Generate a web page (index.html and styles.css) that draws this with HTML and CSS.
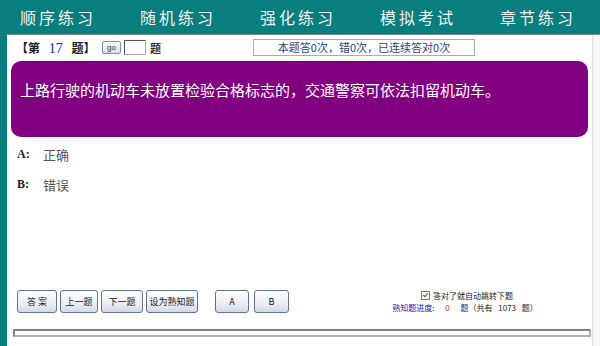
FILE: index.html
```html
<!DOCTYPE html>
<html lang="zh-CN">
<head>
    <meta charset="UTF-8">
    <title>练习</title>
    <link rel="stylesheet" href="styles.css">
</head>
<body>

    <div class="nav">
        <div class="nav-item">顺序练习</div>
        <div class="nav-item">随机练习</div>
        <div class="nav-item">强化练习</div>
        <div class="nav-item">模拟考试</div>
        <div class="nav-item">章节练习</div>
    </div>

    <div class="main">
        <div class="content">
            <div class="topbar">
                <div class="qno">【第 <span class="num">17</span> 题】</div>
                <button class="go">go</button>
                <input type="text" class="jump">
                <span class="ti">题</span>
                <div class="stats">本题答0次，错0次，已连续答对0次</div>
            </div>

            <div class="question">上路行驶的机动车未放置检验合格标志的，交通警察可依法扣留机动车。</div>

            <div class="options">
                <div class="option"><span class="key">A:</span><span class="val">正确</span></div>
                <div class="option"><span class="key">B:</span><span class="val">错误</span></div>
            </div>

            <div class="actions">
                <div class="btns">
                    <button class="btn w40">答 案</button>
                    <button class="btn w38">上一题</button>
                    <button class="btn w42">下一题</button>
                    <button class="btn w51">设为熟知题</button>
                    <button class="btn w34 first-ans">A</button>
                    <button class="btn w35">B</button>
                </div>
                <div class="info">
                    <div class="auto"><span class="check"></span>答对了就自动跳转下题</div>
                    <div class="progress-text">熟知题进度: <span class="red">0</span> 题<span class="dark">（共有 <span class="total">1073</span> 题）</span></div>
                </div>
            </div>

            <div class="bar"></div>
        </div>
        <div class="side"></div>
    </div>

</body>
</html>
```

FILE: styles.css
```css
/* page */
body {
    margin: 0;
    background-color: #087e7e;
    font-family: "Noto Sans CJK SC", "Liberation Sans", sans-serif;
    height: 346px;
    overflow: hidden;
}

.nav {
    height: 34px;
    display: flex;
    align-items: center;
}

.nav-item {
    width: 124px;
    box-sizing: border-box;
    padding-left: 20px;
    color: #f4f4f4;
    font-size: 16px;
    letter-spacing: 3px;
}

.main {
    margin-left: 7px;
    display: flex;
    height: 312px;
    background-color: #f8f8f8;
    border-top: 1px solid #7a8a8a;
}

.content {
    width: 585px;
    background-color: #fff;
    border-right: 1px solid #e2e2e2;
}

.side {
    flex: 1;
}

.topbar {
    display: flex;
    align-items: center;
    height: 17px;
    margin-top: 4px;
    font-size: 12px;
}

.qno {
    margin-left: 9px;
    width: 86px;
    font-weight: bold;
    color: #222;
}

.num {
    color: #1a1ab0;
    font-family: "Liberation Serif", serif;
    font-size: 14px;
    font-weight: normal;
    margin: 0 6px;
}

.go {
    width: 19px;
    height: 13px;
    padding: 0;
    font-size: 8px;
    line-height: 10px;
    border: 1px solid #7f8fa8;
    border-radius: 2px;
    background: linear-gradient(#fafafa, #d8dbe6);
    color: #333;
}

.jump {
    width: 20px;
    height: 13px;
    margin-left: 3px;
    padding: 0;
    border: 1px solid #aaa;
    border-top-color: #555;
    border-left-color: #555;
}

.ti {
    margin-left: 4px;
    font-weight: bold;
    font-size: 11px;
    color: #333;
}

.stats {
    margin-left: 92px;
    width: 220px;
    height: 15px;
    border: 1px solid #8bc47e;
    text-align: center;
    line-height: 15px;
    font-size: 11px;
    color: #2b3f78;
}

.question {
    margin: 5px 4px 0 4px;
    height: 76px;
    box-sizing: border-box;
    background-color: #800080;
    border-radius: 10px;
    color: #fff;
    font-size: 15px;
    padding: 18px 0 0 9px;
    line-height: 22px;
}

.options {
    margin-top: 2px;
}

.option {
    height: 30px;
    display: flex;
    align-items: center;
    font-size: 13px;
}

.key {
    margin-left: 10px;
    width: 26px;
    font-family: "Liberation Serif", serif;
    font-weight: bold;
    font-size: 12px;
    color: #222;
}

.val {
    color: #555;
}

.actions {
    margin-top: 91px;
    height: 23px;
    display: flex;
    align-items: center;
}

.btns {
    display: flex;
    gap: 3px;
    margin-left: 10px;
}

.btn {
    height: 23px;
    padding: 0;
    font-size: 9px;
    font-family: "Noto Sans CJK SC", sans-serif;
    color: #222;
    border: 1px solid #5e7497;
    border-radius: 3px;
    background: linear-gradient(#ffffff, #eceef4 60%, #d4d8e4);
}

.w40 { width: 40px; }
.w38 { width: 38px; }
.w42 { width: 42px; }
.w51 { width: 52px; }
.w34 { width: 34px; }
.w35 { width: 35px; }

.first-ans {
    margin-left: 14px;
}

.btns .w35 {
    margin-left: 2px;
}

.info {
    margin-left: 86px;
    width: 180px;
    text-align: center;
    white-space: nowrap;
    font-size: 8px;
    line-height: 11px;
    color: #222;
}

.auto {
    display: flex;
    align-items: center;
    justify-content: center;
    padding-left: 4px;
}

.check {
    width: 7px;
    height: 7px;
    border: 1px solid #6a7a9a;
    margin-right: 3px;
    position: relative;
    background: #f4f8f0;
}

.check::after {
    content: "";
    position: absolute;
    left: 2px;
    top: 0;
    width: 2px;
    height: 4px;
    border: solid #2a8a2a;
    border-width: 0 1.5px 1.5px 0;
    transform: rotate(45deg);
}

.progress-text {
    color: #2020a0;
    margin-top: 1px;
}

.red {
    color: #d02020;
    margin: 0 9px;
}

.dark {
    color: #222;
}

.total {
    margin: 0 4px;
}

.bar {
    margin: 16px 0 0 6px;
    width: 574px;
    height: 4px;
    border: 2px solid #808080;
    border-bottom-color: #b0b0b0;
    border-right-color: #b0b0b0;
    background: #fff;
}
```
